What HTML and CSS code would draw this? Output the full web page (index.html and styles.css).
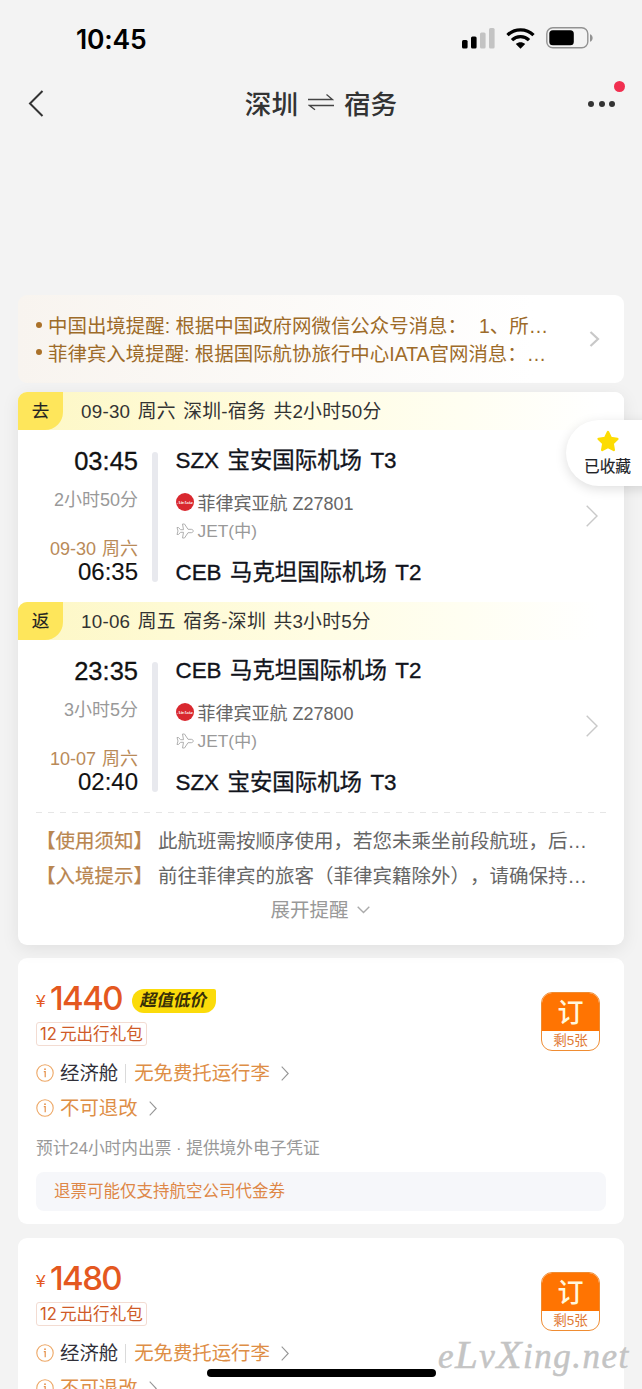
FILE: index.html
```html
<!DOCTYPE html>
<html lang="zh-CN">
<head>
<meta charset="utf-8">
<title>深圳 ⇌ 宿务</title>
<link rel="stylesheet" href="styles.css">
</head>
<body>
<svg width="0" height="0" class="defs">
  <symbol id="plane" viewBox="0 0 18 16"><path d="M1 4.500h1.500l2 2.200h3L6.500 1h2L12 6.300h3.300c1.200 0 1.900.8 1.900 1.700s-.7 1.700-1.900 1.700H12L8.500 15h-2l1-5.700h-3l-2 2.200H1L2 8z" fill="none" stroke="#b0b0b0" stroke-width="1" stroke-linejoin="round"/></symbol>
  <symbol id="info" viewBox="0 0 18 18"><circle cx="9" cy="9" r="8.200" fill="none" stroke="#eda765" stroke-width="1.100"/><path d="M7.800 7.700h1.400v5.600" fill="none" stroke="#e5914a" stroke-width="1.200"/><circle cx="9" cy="5.200" r=".9" fill="#e5914a"/></symbol>
  <symbol id="more" viewBox="0 0 8 15"><path d="M.7.7L7.200 7.500.7 14.300" fill="none" stroke="#969696" stroke-width="1.100"/></symbol>
  <symbol id="arrow" viewBox="0 0 12 22"><path d="M.7.7L11 11 .7 21.300" fill="none" stroke="#c9c9c9" stroke-width="1.400"/></symbol>
</svg>
<div class="screen">
  <header class="top">
    <div class="status">
      <span class="clock">10:45</span>
      <div class="status-icons">
        <svg class="signal" width="33" height="21" viewBox="0 0 33 21"><rect x="0" y="12" width="5.600" height="8.500" rx="1.500"/><rect x="9" y="8.500" width="5.600" height="12" rx="1.500"/><rect x="18" y="4.500" width="5.600" height="16" rx="1.500" fill="#c3c3c3"/><rect x="27" y="0" width="5.600" height="20.500" rx="1.500" fill="#c3c3c3"/></svg>
        <svg class="wifi" width="29" height="21" viewBox="0 0 29 21"><g fill="none" stroke="#000" stroke-width="3.300"><path d="M1.500 7.200C8.500.2 20.500.2 27.500 7.200"/><path d="M6 12.200c4.700-4.700 12.300-4.700 17 0"/></g><path d="M9.800 16c2.800-2.500 6.600-2.500 9.400 0l-4.700 4.800z"/></svg>
        <svg class="battery" width="47" height="22" viewBox="0 0 47 22"><rect x=".8" y=".8" width="41" height="20" rx="6" fill="none" stroke="#929292" stroke-width="1.400"/><rect x="3.300" y="3.300" width="24.500" height="15" rx="3.500"/><path d="M44 7.300c3.500 1 3.500 6.400 0 7.400z" fill="#929292"/></svg>
      </div>
    </div>
    <nav class="nav">
      <svg class="back" width="16" height="27" viewBox="0 0 16 27"><path d="M14.500 1L2 13.500 14.500 26" fill="none" stroke="#333" stroke-width="2"/></svg>
      <h1 class="title"><span>深圳</span><svg width="26" height="17" viewBox="0 0 26 17"><path d="M0 5.500h24.500L18.500 .5M26 11.500H1.500L7 15.800" fill="none" stroke="#444" stroke-width="1.300"/></svg><span>宿务</span></h1>
      <div class="dots"><i></i><i></i><i></i><b class="dot-badge"></b></div>
    </nav>
  </header>

  <section class="notice">
    <ul class="notice-list">
      <li><i></i><span>中国出境提醒: 根据中国政府网微信公众号消息：<em>1、所…</em></span></li>
      <li><i></i><span>菲律宾入境提醒: 根据国际航协旅行中心IATA官网消息：…</span></li>
    </ul>
    <svg width="11" height="16" viewBox="0 0 11 16"><path d="M1.500 1L9 8l-7.500 7" fill="none" stroke="#c8c8c8" stroke-width="2.200"/></svg>
  </section>

  <section class="flights">
    <article class="leg">
      <div class="leg-head"><b class="tag">去</b><span>09-30 周六 深圳-宿务 共2小时50分</span></div>
      <div class="leg-body">
        <div class="times"><span class="depart">03:45</span><span class="duration">2小时50分</span><span class="date">09-30 周六</span><span class="arrive">06:35</span></div>
        <div class="line"></div>
        <div class="route"><strong class="airport">SZX 宝安国际机场 T3</strong><span class="airline"><svg width="18" height="18" viewBox="0 0 18 18"><circle cx="9" cy="9" r="9" fill="#d9282f"/><text x="1.500" y="11" class="logo-text" textLength="15" lengthAdjust="spacingAndGlyphs">AirAsia</text></svg>菲律宾亚航 Z27801</span><span class="craft"><svg width="18" height="16"><use href="#plane"/></svg>JET(中)</span><strong class="airport last">CEB 马克坦国际机场 T2</strong></div>
        <svg class="leg-arrow" width="12" height="22"><use href="#arrow"/></svg>
      </div>
    </article>
    <article class="leg">
      <div class="leg-head"><b class="tag">返</b><span>10-06 周五 宿务-深圳 共3小时5分</span></div>
      <div class="leg-body">
        <div class="times"><span class="depart">23:35</span><span class="duration">3小时5分</span><span class="date">10-07 周六</span><span class="arrive">02:40</span></div>
        <div class="line"></div>
        <div class="route"><strong class="airport">CEB 马克坦国际机场 T2</strong><span class="airline"><svg width="18" height="18" viewBox="0 0 18 18"><circle cx="9" cy="9" r="9" fill="#d9282f"/><text x="1.500" y="11" class="logo-text" textLength="15" lengthAdjust="spacingAndGlyphs">AirAsia</text></svg>菲律宾亚航 Z27800</span><span class="craft"><svg width="18" height="16"><use href="#plane"/></svg>JET(中)</span><strong class="airport last">SZX 宝安国际机场 T3</strong></div>
        <svg class="leg-arrow" width="12" height="22"><use href="#arrow"/></svg>
      </div>
    </article>
    <div class="tips">
      <p><b>【使用须知】</b><span>此航班需按顺序使用，若您未乘坐前段航班，后…</span></p>
      <p><b>【入境提示】</b><span>前往菲律宾的旅客（菲律宾籍除外），请确保持…</span></p>
      <div class="expand">展开提醒<svg width="13" height="8" viewBox="0 0 13 8"><path d="M.7.7l5.800 5.800L12.300.7" fill="none" stroke="#aaa" stroke-width="1.400"/></svg></div>
    </div>
    <aside class="favorite"><svg width="24" height="23" viewBox="0 0 24 23"><path d="M12 2l2.900 6 6.500.9-4.700 4.600 1.100 6.500-5.800-3.100L6.200 20l1.100-6.500L2.600 8.900 9.100 8z" fill="#fddc03" stroke="#fddc03" stroke-width="2.400" stroke-linejoin="round"/></svg><span>已收藏</span></aside>
  </section>

  <section class="fare">
    <div class="fare-main">
      <div class="price"><small>¥</small><b>1440</b><em class="deal"><span>超值低价</span></em></div>
      <div class="coupon">12<span>元出行礼包</span></div>
      <div class="rule cabin"><svg width="18" height="18"><use href="#info"/></svg><b>经济舱</b><i></i><span>无免费托运行李</span><svg class="more" width="8" height="15"><use href="#more"/></svg></div>
      <div class="rule"><svg width="18" height="18"><use href="#info"/></svg><span>不可退改</span><svg class="more" width="8" height="15"><use href="#more"/></svg></div>
      <div class="issue">预计24小时内出票 · 提供境外电子凭证</div>
    </div>
    <div class="book"><b>订</b><span>剩5张</span></div>
    <div class="refund">退票可能仅支持航空公司代金券</div>
  </section>

  <section class="fare">
    <div class="fare-main">
      <div class="price"><small>¥</small><b>1480</b></div>
      <div class="coupon">12<span>元出行礼包</span></div>
      <div class="rule cabin"><svg width="18" height="18"><use href="#info"/></svg><b>经济舱</b><i></i><span>无免费托运行李</span><svg class="more" width="8" height="15"><use href="#more"/></svg></div>
      <div class="rule"><svg width="18" height="18"><use href="#info"/></svg><span>不可退改</span><svg class="more" width="8" height="15"><use href="#more"/></svg></div>
    </div>
    <div class="book"><b>订</b><span>剩5张</span></div>
  </section>
  <div class="watermark">e<b>L</b>v<b>X</b>ing.net</div>
  <div class="home-bar"></div>
</div>
</body>
</html>
```

FILE: styles.css
```css
* { box-sizing: border-box; }
body, h1, ul, p { margin: 0; padding: 0; }
i, em { font-style: normal; }
svg { display: block; flex: none; }
body { background: #f3f3f3; font-family: "Liberation Sans", "Noto Sans CJK SC", sans-serif; color: #333; text-spacing-trim: space-all; }
.defs { position: absolute; }
.screen { position: relative; width: 642px; height: 1389px; overflow: hidden; white-space: nowrap; }

.top { height: 295px; }
.status { height: 76px; display: flex; justify-content: space-between; padding: 0 49px 0 76px; align-items: center; }
.clock { font: 600 26.500px/30px Inter, sans-serif; color: #000; letter-spacing: -.2px; padding-top: 2px; }
.status-icons { display: flex; align-items: center; }
.wifi { margin-left: 11px; }
.battery { margin-left: 11px; }
.nav { height: 55px; display: flex; align-items: center; justify-content: space-between; padding: 0 27px 0 28px; }
.title { display: flex; align-items: center; gap: 10px; font-size: 26.600px; font-weight: 500; line-height: 40px; padding-left: 10px; }
.title span { padding-top: 2px; }
.title svg { margin-top: -2px; }
.dots { position: relative; display: flex; gap: 4.500px; }
.dots i { width: 6px; height: 6px; border-radius: 50%; background: #333; }
.dot-badge { position: absolute; left: 26px; top: -20px; width: 11px; height: 11px; border-radius: 50%; background: #f12f50; }

.notice { margin: 0 18px; height: 87.500px; border-radius: 9px; background: linear-gradient(90deg, #f8f4ef, #fff 85%); display: flex; align-items: center; padding: 0 24px 0 18px; justify-content: space-between; }
.notice-list { list-style: none; color: #9d6b29; font-size: 19.450px; padding-bottom: 1px; }
.notice li { display: flex; align-items: center; height: 27.500px; }
.notice li i { width: 6px; height: 6px; border-radius: 50%; background: #aa7129; margin-right: 6px; }
.notice em { margin-left: 12px; }

.flights { position: relative; z-index: 1; margin: 9.500px 18px 0; height: 553px; border-radius: 9px; background: #fff; box-shadow: 0 4px 18px rgba(0,0,0,.08); }
.leg { height: 210px; }
.leg-head { height: 37.500px; display: flex; align-items: center; gap: 18px; background: linear-gradient(90deg, #fdf7c4, #fffde4 50%, #fff 96%); border-radius: 9px 9px 0 0; font-size: 18.800px; letter-spacing: .25px; word-spacing: 2px; }
.leg-head > span { position: relative; top: -1px; }
.tag { width: 45px; height: 37.500px; background: #fee65b; border-radius: 9px 0 18px 0; font-size: 17.500px; line-height: 38px; text-align: center; font-weight: 400; -webkit-text-stroke: .15px #222; color: #222; }
.leg-body { display: flex; height: 172.500px; position: relative; padding-left: 18px; }
.times { width: 102px; display: flex; flex-direction: column; align-items: flex-end; padding-top: 15px; }
.times span { flex: none; }
.depart { font-size: 25.500px; line-height: 32px; color: #111; -webkit-text-stroke: .3px #111; }
.duration { font-size: 18px; line-height: 26px; color: #999; margin-top: 10px; }
.date { font-size: 18px; line-height: 24px; color: #b98a58; margin-top: 24px; word-spacing: 1px; }
.arrive { font-size: 24px; line-height: 24px; margin-top: -1px; color: #111; -webkit-text-stroke: .15px #111; }
.line { width: 5.500px; height: 130px; border-radius: 3px; background: #e8e9ee; margin: 22.500px 18px 0 14px; }
.route { display: flex; flex-direction: column; padding-top: 15.500px; }
.airport { font-size: 22.400px; line-height: 32px; font-weight: 400; color: #11131b; -webkit-text-stroke: .35px #11131b; word-spacing: 2.300px; }
.airline, .craft { display: flex; align-items: center; gap: 4px; font-size: 18px; line-height: 28px; color: #666; }
.airline { margin-top: 13px; }
.airline svg { margin-top: -4px; }
.craft { color: #999; font-size: 17.300px; line-height: 27px; }
.craft svg { margin-top: -2px; }
.airport.last { margin-top: 11.500px; }
.logo-text { font: italic bold 5px "Liberation Serif", serif; fill: #fff; }
.leg-arrow { position: absolute; right: 26px; top: 75px; }
.tips { margin: 0 18px; background: repeating-linear-gradient(90deg, #e6e6e6 0 6px, transparent 6px 12px) 0 0/100% 1px no-repeat; }
.tips p { height: 34.500px; line-height: 34.500px; font-size: 19.500px; color: #666; display: flex; }
.tips p:first-child { padding-top: 12px; height: 46.500px; }
.tips b { color: #b98650; font-weight: 400; -webkit-text-stroke: .2px #b98650; margin-right: 5px; }
.expand { display: flex; align-items: center; justify-content: center; gap: 8px; height: 34px; line-height: 34px; font-size: 19.500px; color: #999; padding-right: 2px; }
.favorite { position: absolute; left: 548px; top: 28px; width: 90px; height: 66px; border-radius: 33px 0 0 33px; background: #fff; box-shadow: 0 3px 12px rgba(0,0,0,.13); padding: 10px 0 0 18px; }
.favorite svg { margin-left: 12px; }
.favorite span { display: block; font-size: 15.700px; line-height: 28px; color: #202226; -webkit-text-stroke: .15px #202226; }

.fare { position: relative; margin: 13px 18px 0; height: 266px; border-radius: 9px; background: #fff; padding: 0 18px; }
.fare + .fare { margin-top: 14px; }
.fare-main { height: 214px; padding-top: 19.500px; }
.price { display: flex; height: 40px; align-items: center; color: #e45820; }
.price small { font-size: 17px; width: 14px; padding-top: 8px; }
.price b { font: 500 33px/40px Inter, sans-serif; letter-spacing: -1.600px; width: 82px; }
.deal { width: 84px; height: 24px; border-radius: 12px 2px 12px 12px; background: #fbdb0a; color: #382f08; margin-top: 7px; text-align: center; line-height: 23px; font-size: 16.700px; font-weight: 700; }
.deal span { display: block; transform: skewX(-12deg); }
.coupon { width: 111px; height: 24px; margin-top: 4.500px; border: 1px solid #f3dcd2; border-radius: 3px; color: #cf5b28; font: 16.600px/22px Inter, "Noto Sans CJK SC", sans-serif; padding-left: 3px; display: flex; gap: 3px; }
.rule { display: flex; align-items: center; height: 35px; font-size: 19.400px; line-height: 34px; color: #de8e46; }
.rule > svg:first-child { margin-right: 6px; }
.cabin { margin-top: 9.500px; }
.rule b { color: #303039; font-weight: 400; }
.rule i { width: 1px; height: 19px; background: #dadada; margin: 0 8px 0 7px; }
.rule .more { margin-left: 11px; }
.issue { font-size: 16.700px; color: #999; line-height: 26px; margin-top: 10px; }
.book { position: absolute; right: 24px; top: 34px; width: 59px; height: 59px; border: 1px solid #ef8c32; border-radius: 11px; overflow: hidden; text-align: center; color: #e07934; }
.book b { display: block; background: #ff7402; color: #fff8dd; font-size: 26px; font-weight: 500; line-height: 38px; height: 38px; padding-top: 1px; }
.book span { display: block; font-size: 13.500px; line-height: 19px; }
.refund { height: 39px; border-radius: 8px; background: #f6f7fa; color: #de8747; font-size: 16.500px; line-height: 38px; padding-left: 18px; }
.watermark { position: absolute; z-index: 3; left: 438px; top: 1333px; font: italic 35px/48px "Liberation Serif", serif; color: #c4c4c4; letter-spacing: 1.500px; -webkit-text-stroke: .5px #c4c4c4; }
.watermark b { font-size: 41px; font-weight: 400; line-height: 1; }
.home-bar { position: absolute; z-index: 4; left: 207px; top: 1369px; width: 229px; height: 8px; border-radius: 4px; background: #000; }
```
